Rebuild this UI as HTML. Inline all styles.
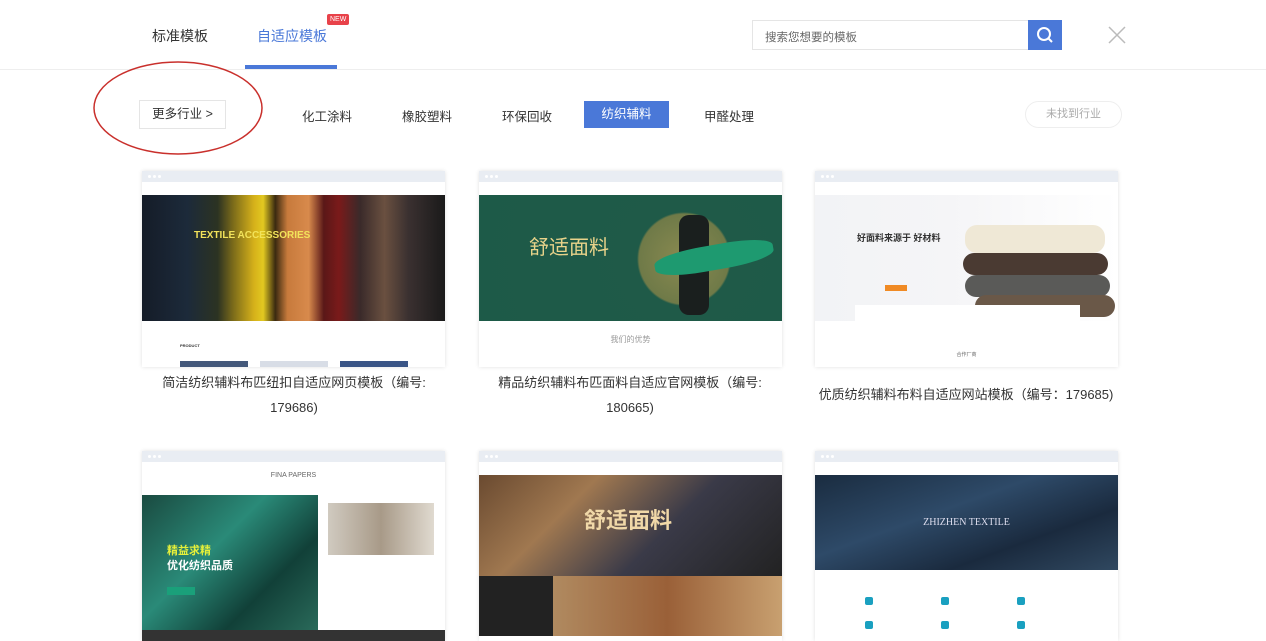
<!DOCTYPE html>
<html><head><meta charset="utf-8"><style>
*{margin:0;padding:0;box-sizing:border-box}
body{width:1266px;height:634px;overflow:hidden;background:#fff;font-family:"Liberation Sans","Noto Sans CJK SC",sans-serif;position:relative;color:#333}
.a{position:absolute}
.card{position:absolute;width:303px;background:#fff;box-shadow:0 0 4px rgba(0,0,0,.12);overflow:hidden}
.bar{height:11px;background:#e9edf3;position:relative}
.bar i{position:absolute;top:4px;width:3px;height:3px;border-radius:50%;background:#fff}
.nav{height:13px;background:#fff}
.cap{position:absolute;width:336px;text-align:center;font-size:13px;color:#333;line-height:25px}
.tab{font-size:12.5px;color:#333;position:absolute;top:106px;white-space:nowrap}
</style></head><body>
<div class="a" style="left:152px;top:26px;font-size:14px;color:#333">标准模板</div>
<div class="a" style="left:257px;top:26px;font-size:14px;color:#4a78d8">自适应模板</div>
<div class="a" style="left:327px;top:14px;background:#e8424a;color:#fff;font-size:7px;padding:2px 3px;border-radius:2px">NEW</div>
<div class="a" style="left:245px;top:65px;width:92px;height:4px;background:#4a78d8"></div>
<div class="a" style="left:0;top:69px;width:1266px;height:1px;background:#eee"></div>
<div class="a" style="left:752px;top:20px;width:277px;height:30px;border:1px solid #e5e5e5;font-size:11.5px;color:#666;padding:8px 12px">搜索您想要的模板</div>
<div class="a" style="left:1028px;top:20px;width:34px;height:30px;background:#4a78d8"><svg width="34" height="30"><circle cx="16" cy="14" r="6" stroke="#fff" stroke-width="2" fill="none"/><line x1="20" y1="18" x2="24" y2="22" stroke="#fff" stroke-width="2"/></svg></div>
<svg class="a" style="left:1108px;top:26px" width="18" height="18"><path d="M1 1L17 17M17 1L1 17" stroke="#bbb" stroke-width="1.5"/></svg>
<svg class="a" style="left:92px;top:60px" width="176" height="100"><ellipse cx="86" cy="48" rx="84" ry="46" fill="none" stroke="#c9302c" stroke-width="1.5"/></svg>
<div class="a" style="left:139px;top:100px;width:87px;height:29px;border:1px solid #e5e5e5;font-size:12.5px;line-height:27px;text-align:center;white-space:nowrap">更多行业 &gt;</div>
<div class="tab" style="left:302px">化工涂料</div>
<div class="tab" style="left:402px">橡胶塑料</div>
<div class="tab" style="left:502px">环保回收</div>
<div class="a" style="left:584px;top:101px;width:85px;height:27px;background:#4a78d8;color:#fff;font-size:12.5px;text-align:center;line-height:27px">纺织辅料</div>
<div class="tab" style="left:704px">甲醛处理</div>
<div class="a" style="left:1025px;top:101px;width:97px;height:27px;border:1px solid #eee;border-radius:14px;font-size:11px;color:#aaa;text-align:center;line-height:25px">未找到行业</div>

<div class="card" style="left:142px;top:171px;height:196px"><div class="bar"><i style="left:6px"></i><i style="left:11px"></i><i style="left:16px"></i></div><div class="nav"></div>
<div style="height:126px;background:linear-gradient(90deg,#151c28 0,#1c2a3a 15%,#2c3322 25%,#7a6a1a 30%,#d6b11a 37%,#e2c820 40%,#3a2a10 44%,#c77a3c 48%,#d88a4c 55%,#5a1818 60%,#7a1a1a 65%,#3a2a2a 72%,#6a5040 80%,#3a3030 88%,#1a1a1a 100%);position:relative"><div class="a" style="left:52px;top:35px;color:#f2e35a;font-size:10px;font-weight:bold">TEXTILE ACCESSORIES</div></div>
<div class="a" style="left:38px;top:172px;font-size:4px;font-weight:bold">PRODUCT</div>
<div class="a" style="left:38px;top:190px;width:68px;height:6px;background:#44587a"></div><div class="a" style="left:118px;top:190px;width:68px;height:6px;background:#d8dde6"></div><div class="a" style="left:198px;top:190px;width:68px;height:6px;background:#3a5586"></div></div>
<div class="cap" style="left:126px;top:370px">简洁纺织辅料布匹纽扣自适应网页模板（编号:<br>179686)</div>

<div class="card" style="left:479px;top:171px;height:196px"><div class="bar"><i style="left:6px"></i><i style="left:11px"></i><i style="left:16px"></i></div><div class="nav"></div>
<div style="height:126px;background:radial-gradient(circle at 205px 64px,#8a8a50 0,#6f7a48 45px,#1f5a48 47px,#1d5a48 100%);position:relative"><div class="a" style="left:50px;top:36px;color:#e8d38a;font-size:20px">舒适面料</div><div class="a" style="left:200px;top:20px;width:30px;height:100px;background:#1a1f1e;border-radius:10px"></div><div class="a" style="left:175px;top:50px;width:120px;height:25px;background:#1e9a70;border-radius:40%;transform:rotate(-10deg)"></div></div>
<div class="a" style="left:0;top:163px;width:303px;text-align:center;font-size:8px;color:#999">我们的优势</div></div>
<div class="cap" style="left:462px;top:370px">精品纺织辅料布匹面料自适应官网模板（编号:<br>180665)</div>

<div class="card" style="left:815px;top:171px;height:196px"><div class="bar"><i style="left:6px"></i><i style="left:11px"></i><i style="left:16px"></i></div><div class="nav"></div>
<div style="height:126px;background:linear-gradient(90deg,#f2f3f6 0,#f5f5f7 45%,#fff 100%);position:relative"><div class="a" style="left:42px;top:36px;font-size:9px;font-weight:bold;color:#333">好面料来源于 好材料</div><div class="a" style="left:70px;top:90px;width:22px;height:6px;background:#f08a24"></div>
<div class="a" style="left:150px;top:30px;width:140px;height:28px;background:#efe8d6;border-radius:12px"></div><div class="a" style="left:148px;top:58px;width:145px;height:22px;background:#4a3a32;border-radius:12px"></div><div class="a" style="left:150px;top:80px;width:145px;height:22px;background:#5a5a58;border-radius:12px"></div><div class="a" style="left:160px;top:100px;width:140px;height:22px;background:#6a5848;border-radius:12px"></div>
<div class="a" style="left:40px;top:110px;width:225px;height:16px;background:#fff"></div></div>
<div class="a" style="left:0;top:180px;width:303px;text-align:center;font-size:5px;color:#666">合作厂商</div></div>
<div class="cap" style="left:798px;top:382px">优质纺织辅料布料自适应网站模板（编号：179685)</div>

<div class="card" style="left:142px;top:451px;height:190px"><div class="bar"><i style="left:6px"></i><i style="left:11px"></i><i style="left:16px"></i></div>
<div style="height:33px;text-align:center;font-size:7px;color:#666;padding-top:10px">FINA PAPERS</div>
<div class="a" style="left:0;top:44px;width:176px;height:135px;background:linear-gradient(135deg,#1a4a40,#2a8a78 40%,#114038 70%,#2a6a5a)"><div class="a" style="left:25px;top:47px;color:#e6f03a;font-size:11px;font-weight:bold">精益求精</div><div class="a" style="left:25px;top:62px;color:#fff;font-size:11px;font-weight:bold">优化纺织品质</div><div class="a" style="left:25px;top:92px;width:28px;height:8px;background:#1aa07a"></div></div>
<div class="a" style="left:186px;top:52px;width:106px;height:52px;background:linear-gradient(90deg,#d0cac0,#a89a88,#e0dad0)"></div>
<div class="a" style="left:0;top:179px;width:303px;height:11px;background:#333"></div></div>

<div class="card" style="left:479px;top:451px;height:190px"><div class="bar"><i style="left:6px"></i><i style="left:11px"></i><i style="left:16px"></i></div><div class="nav"></div>
<div style="height:101px;background:linear-gradient(135deg,#6a4a30,#a07850 30%,#3a3a48 60%,#222 100%);position:relative"><div class="a" style="left:105px;top:28px;color:#f0d8a8;font-size:22px;font-weight:bold">舒适面料</div></div>
<div class="a" style="left:0;top:125px;width:74px;height:60px;background:#222"></div><div class="a" style="left:74px;top:125px;width:229px;height:60px;background:linear-gradient(90deg,#b08a60,#9a6038 50%,#c8a070)"></div></div>

<div class="card" style="left:815px;top:451px;height:190px"><div class="bar"><i style="left:6px"></i><i style="left:11px"></i><i style="left:16px"></i></div><div class="nav"></div>
<div style="height:95px;background:linear-gradient(160deg,#1a2c40,#2e4a68 40%,#1a2a3e 70%,#304860);position:relative;text-align:center;color:#dde;font-family:'Liberation Serif',serif;font-size:10px;padding-top:42px">ZHIZHEN TEXTILE</div>
<div class="a" style="left:50px;top:146px;width:8px;height:8px;background:#1aa0c0;border-radius:2px"></div><div class="a" style="left:126px;top:146px;width:8px;height:8px;background:#1aa0c0;border-radius:2px"></div><div class="a" style="left:202px;top:146px;width:8px;height:8px;background:#1aa0c0;border-radius:2px"></div>
<div class="a" style="left:50px;top:170px;width:8px;height:8px;background:#1aa0c0;border-radius:2px"></div><div class="a" style="left:126px;top:170px;width:8px;height:8px;background:#1aa0c0;border-radius:2px"></div><div class="a" style="left:202px;top:170px;width:8px;height:8px;background:#1aa0c0;border-radius:2px"></div></div>
</body></html>
